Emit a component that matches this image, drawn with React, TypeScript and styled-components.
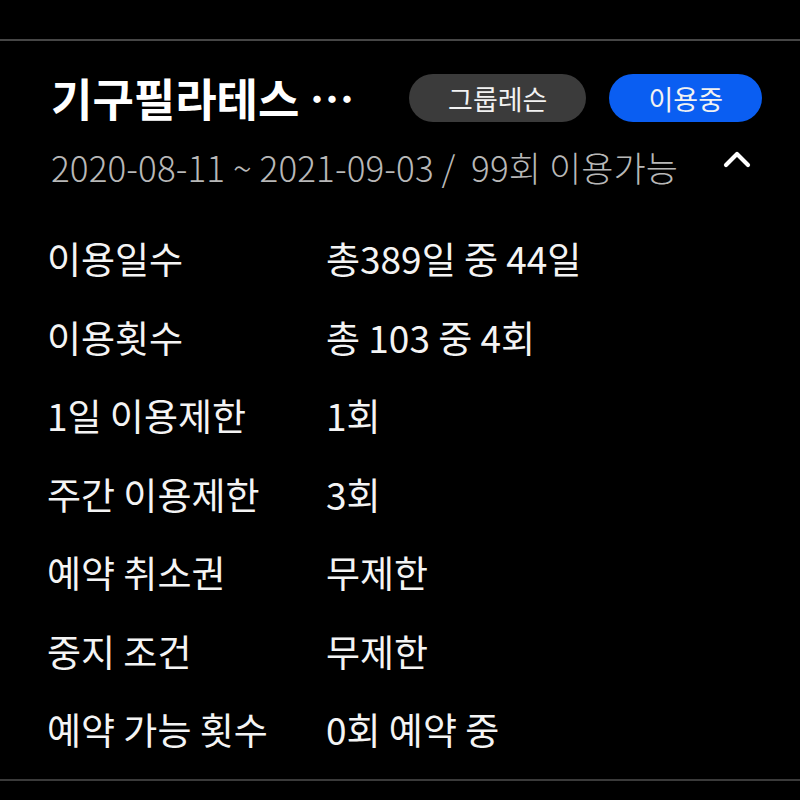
import styled, { createGlobalStyle } from "styled-components";

const GlobalStyle = createGlobalStyle`
  body {
    margin: 0;
    background: #000;
    font-family: "Noto Sans CJK KR", "Noto Sans", sans-serif;
    color: #fff;
  }
`

const Page = styled.div`
  width: 800px;
  height: 800px;
  padding-top: 39px;
  box-sizing: border-box;
  background: #000;
`

const Card = styled.section`
  border-top: 2px solid #464646;
  border-bottom: 2px solid #3a3a3a;
  padding-bottom: 10px;
`

const Header = styled.div`
  padding: 32px 38px 0 51px;
`

const TitleRow = styled.div`
  display: flex;
  align-items: center;
  height: 50px;
`

const Title = styled.h1`
  flex: 1;
  margin: 0;
  font-size: 45px;
  line-height: 50px;
  font-weight: 700;
  color: #fff;
  white-space: nowrap;
`

const Badges = styled.div`
  display: flex;
  gap: 23px;
`

const Badge = styled.span<{ $active?: boolean }>`
  display: flex;
  align-items: center;
  justify-content: center;
  height: 48px;
  padding: 0 39px;
  border-radius: 24px;
  font-size: 27px;
  color: #f2f2f2;
  background: ${(p) => (p.$active ? "#0a5ef2" : "#3b3b3b")};
`

const PeriodRow = styled.div`
  display: flex;
  align-items: center;
  justify-content: space-between;
  margin-top: 23px;
  height: 40px;
`

const Period = styled.span`
  font-family: "Noto Sans CJK KR Light", "Noto Sans CJK KR DemiLight", "Roboto", "Noto Sans CJK KR", sans-serif;
  font-size: 35px;
  font-weight: 300;
  color: #b8b8b8;
  white-space: pre;
  letter-spacing: 0.1px;
`

const Toggle = styled.button`
  background: none;
  border: none;
  padding: 0;
  margin-right: 11px;
  margin-top: -14px;
  display: flex;
  cursor: pointer;
`

const InfoList = styled.dl`
  margin: 33px 0 0;
  padding: 0 0 0 47px;
`

const InfoRow = styled.div`
  display: grid;
  grid-template-columns: 279px 1fr;
  align-items: center;
  height: 78.5px;
  font-size: 37px;
  color: #f4f4f4;
`

const Label = styled.dt`
  margin: 0;
  white-space: nowrap;
`

const Value = styled.dd`
  margin: 0;
  white-space: nowrap;
`

const rows: [string, string][] = [
  ["이용일수", "총389일 중 44일"],
  ["이용횟수", "총 103 중 4회"],
  ["1일 이용제한", "1회"],
  ["주간 이용제한", "3회"],
  ["예약 취소권", "무제한"],
  ["중지 조건", "무제한"],
  ["예약 가능 횟수", "0회 예약 중"],
]

const ChevronUp = () => (
  <svg width="28" height="18" viewBox="0 0 28 18">
    <polyline
      points="3,15 14,4 25,15"
      fill="none"
      stroke="#fff"
      strokeWidth="4.2"
      strokeLinecap="round"
      strokeLinejoin="round"
    />
  </svg>
)

const App = () => {
  return (
    <Page>
      <GlobalStyle />
      <Card>
        <Header>
          <TitleRow>
            <Title>기구필라테스 ⋯</Title>
            <Badges>
              <Badge>그룹레슨</Badge>
              <Badge $active>이용중</Badge>
            </Badges>
          </TitleRow>
          <PeriodRow>
            <Period>2020-08-11 ~ 2021-09-03 /  99회 이용가능</Period>
            <Toggle aria-label="접기">
              <ChevronUp />
            </Toggle>
          </PeriodRow>
        </Header>
        <InfoList>
          {rows.map(([label, value]) => (
            <InfoRow key={label}>
              <Label>{label}</Label>
              <Value>{value}</Value>
            </InfoRow>
          ))}
        </InfoList>
      </Card>
    </Page>
  )
}

export default App;
